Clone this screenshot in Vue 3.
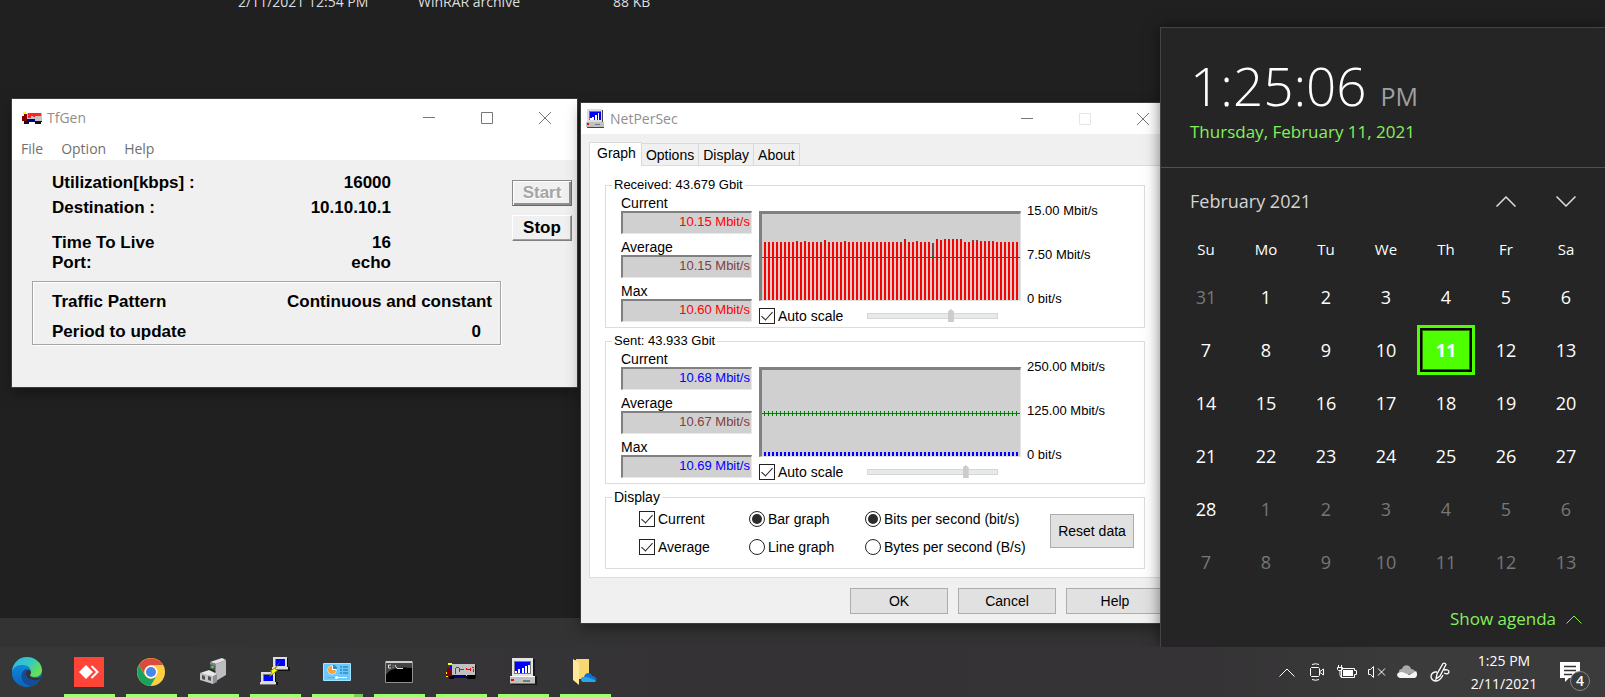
<script setup>
import { ref } from 'vue'

const tfMenu = ['File', 'Option', 'Help']
const tfRows = [
  { label: 'Utilization[kbps] :', value: '16000' },
  { label: 'Destination :', value: '10.10.10.1' },
  { label: 'Time To Live', value: '16', spaced: true },
  { label: 'Port:', value: 'echo', tight: true },
]

const tabs = ['Graph', 'Options', 'Display', 'About']

// Height of each received sample: [current, average]
const overrides = {
  8: [58, 59], 10: [58, 59], 14: [57, 58], 15: [60, 58], 20: [58, 59], 34: [57, 58],
  35: [61, 58], 38: [58, 59], 42: [44, 57], 43: [61, 58], 44: [60, 58], 45: [61, 58],
  46: [60, 61], 47: [61, 58], 48: [60, 61], 49: [61, 58], 52: [58, 60], 53: [58, 60],
  54: [58, 59], 55: [58, 59], 56: [58, 59], 57: [58, 59],
}
const received = Array.from({ length: 64 }, (_, i) => overrides[i] || [58, 58])
const sent = Array.from({ length: 64 }, () => [4, 4])

const channels = ref([
  {
    id: 'rx', title: 'Received: 43.679 Gbit', color: '#ff0000', bars: received, auto: true, slider: 65,
    stats: [['Current', '10.15 Mbit/s'], ['Average', '10.15 Mbit/s'], ['Max', '10.60 Mbit/s']],
    scale: ['15.00 Mbit/s', '7.50 Mbit/s', '0 bit/s'],
  },
  {
    id: 'tx', title: 'Sent: 43.933 Gbit', color: '#0000ff', bars: sent, auto: true, slider: 77,
    stats: [['Current', '10.68 Mbit/s'], ['Average', '10.67 Mbit/s'], ['Max', '10.69 Mbit/s']],
    scale: ['250.00 Mbit/s', '125.00 Mbit/s', '0 bit/s'],
  },
])

const graphKind = ref('bar')
const unit = ref('bits')
const showCurrent = ref(true)
const showAverage = ref(true)

const weekdays = ['Su', 'Mo', 'Tu', 'We', 'Th', 'Fr', 'Sa']
const weeks = Array.from({ length: 6 }, (_, w) =>
  Array.from({ length: 7 }, (_, d) => {
    const n = w * 7 + d
    if (n === 0) return { day: 31, muted: true }
    return n > 28 ? { day: n - 28, muted: true } : { day: n, muted: false }
  }),
)
</script>

<template>
  <main class="desktop">
    <div class="file-row">
      <span class="file-date">2/11/2021 12:54 PM</span>
      <span class="file-type">WinRAR archive</span>
      <span class="file-size">88 KB</span>
    </div>
    <div class="status-band"></div>

    <section class="window tfgen" aria-label="TfGen">
      <header class="titlebar tf-title">
        <svg class="tf-icon" viewBox="0 0 20 12" shape-rendering="crispEdges">
          <path fill="#c4c4c4" d="M5 1h15v8H5z" /><path fill="#800000" d="M2 2h3v7H0V4h2z" />
          <path fill="#ff0" d="M1 0h3v2H1z" /><path fill="#f22" d="M6 1h13v3H6zM6 4h3v2H6zM11 4h2v1h-2z" />
          <path fill="#000080" d="M5 7h8v3H5z" /><path fill="#111" d="M2 9h5v3H2zM13 9h6v3h-6zM6 9h14v1H6z" />
        </svg>
        <h1>TfGen</h1>
        <div class="caption">
          <button aria-label="Minimize"><svg viewBox="0 0 12 12"><path d="M0 5.5h12" /></svg></button>
          <button aria-label="Maximize"><svg viewBox="0 0 12 12"><path d="M.5.5h11v11H.5z" /></svg></button>
          <button aria-label="Close"><svg viewBox="0 0 12 12"><path d="M0 0l12 12M12 0L0 12" /></svg></button>
        </div>
      </header>
      <nav class="tf-menu"><button v-for="m in tfMenu" :key="m">{{ m }}</button></nav>
      <div class="tf-body">
        <div class="tf-info">
          <div v-for="r in tfRows" :key="r.label" class="tf-row" :class="{ spaced: r.spaced, tight: r.tight }">
            <span>{{ r.label }}</span><span>{{ r.value }}</span>
          </div>
          <div class="tf-group">
            <div class="tf-row"><span>Traffic Pattern</span><span>Continuous and constant</span></div>
            <div class="tf-row"><span>Period to update</span><span class="period">0</span></div>
          </div>
        </div>
        <div class="tf-actions">
          <button class="start" disabled>Start</button>
          <button>Stop</button>
        </div>
      </div>
    </section>

    <section class="window netpersec" aria-label="NetPerSec">
      <header class="titlebar np-title">
        <svg class="np-icon" viewBox="0 0 27 28" shape-rendering="crispEdges">
          <path fill="#444" d="M3 1h21v17h2v9H1v-9h3z" /><path fill="#dcdcdc" d="M2 0h21v18H2z" /><path fill="#c0c0c0" d="M0 18h25v8H0z" />
          <path fill="#777" d="M0 25h25v1H0zM4 3h17v13H4z" /><path fill="#00f" d="M5 4h16v11H5z" />
          <path fill="#fff" d="M6 12h2v3H6zM9 11h2v4H9zM13 8h2v7h-2zM17 6h2v9h-2z" /><path fill="#f00" d="M1 20h3v2H1z" /><path fill="#777" d="M13 21h7v2h-7z" />
        </svg>
        <h1>NetPerSec</h1>
        <div class="caption">
          <button aria-label="Minimize"><svg viewBox="0 0 12 12"><path d="M0 5.5h12" /></svg></button>
          <button aria-label="Maximize" disabled><svg viewBox="0 0 12 12"><path d="M.5.5h11v11H.5z" /></svg></button>
          <button aria-label="Close"><svg viewBox="0 0 12 12"><path d="M0 0l12 12M12 0L0 12" /></svg></button>
        </div>
      </header>
      <div class="np-body">
        <div class="tabs" role="tablist">
          <button v-for="(t, i) in tabs" :key="t" role="tab" :aria-selected="i === 0">{{ t }}</button>
        </div>
        <div class="panel">
          <fieldset v-for="c in channels" :key="c.id">
            <legend class="small">{{ c.title }}</legend>
            <div class="channel">
              <div class="stats">
                <label v-for="(s, i) in c.stats" :key="s[0]">
                  <span>{{ s[0] }}</span>
                  <input readonly :value="s[1]" :class="i === 1 ? 'avg' : c.id" />
                </label>
              </div>
              <div class="plot-col">
                <svg class="plot" viewBox="0 0 258 86" shape-rendering="crispEdges">
                  <g v-for="(b, i) in c.bars" :key="i">
                    <rect :x="2 + i * 4" :y="86 - b[1]" width="2" :height="b[1]" fill="#804040" />
                    <rect :x="2 + i * 4" :y="86 - b[0]" width="2" :height="b[0]" :fill="c.color" />
                    <rect v-if="c.id === 'tx'" :x="2 + i * 4" y="41" width="1" height="5" fill="#008000" />
                  </g>
                  <rect x="0" y="43" width="258" height="1" fill="#008000" />
                  <rect v-if="c.id === 'rx'" x="170" y="41" width="2" height="2" fill="#008000" />
                </svg>
                <div class="plot-tools">
                  <label class="opt"><input v-model="c.auto" type="checkbox" />Auto scale</label>
                  <input v-model="c.slider" type="range" min="0" max="100" :aria-label="c.title + ' scale'" />
                </div>
              </div>
              <div class="scale small"><span v-for="s in c.scale" :key="s">{{ s }}</span></div>
            </div>
          </fieldset>
          <fieldset>
            <legend>Display</legend>
            <div class="display">
              <div class="choices">
                <label class="opt"><input v-model="showCurrent" type="checkbox" />Current</label>
                <label class="opt"><input v-model="graphKind" type="radio" name="kind" value="bar" />Bar graph</label>
                <label class="opt"><input v-model="unit" type="radio" name="unit" value="bits" />Bits per second (bit/s)</label>
                <label class="opt"><input v-model="showAverage" type="checkbox" />Average</label>
                <label class="opt"><input v-model="graphKind" type="radio" name="kind" value="line" />Line graph</label>
                <label class="opt"><input v-model="unit" type="radio" name="unit" value="bytes" />Bytes per second (B/s)</label>
              </div>
              <button class="push reset">Reset data</button>
            </div>
          </fieldset>
        </div>
        <footer><button class="push">OK</button><button class="push">Cancel</button><button class="push">Help</button></footer>
      </div>
    </section>

    <aside class="flyout">
      <header>
        <p class="time"><span>1:25:06</span><small>PM</small></p>
        <a href="#" class="today">Thursday, February 11, 2021</a>
      </header>
      <div class="month">
        <button class="month-name">February 2021</button>
        <button class="chev" aria-label="Previous month"><svg viewBox="0 0 20 11"><path d="M.5 10.500L10 1l9.500 9.500" /></svg></button>
        <button class="chev" aria-label="Next month"><svg viewBox="0 0 20 11"><path d="M.5.500L10 10l9.500-9.500" /></svg></button>
      </div>
      <table>
        <thead><tr><th v-for="d in weekdays" :key="d">{{ d }}</th></tr></thead>
        <tbody>
          <tr v-for="(w, i) in weeks" :key="i">
            <td v-for="(d, j) in w" :key="j">
              <button :class="{ muted: d.muted, selected: d.day === 11 && !d.muted }">{{ d.day }}</button>
            </td>
          </tr>
        </tbody>
      </table>
      <button class="agenda">Show agenda <svg viewBox="0 0 16 9"><path d="M.5 8.500L8 1l7.500 7.500" /></svg></button>
    </aside>

    <footer class="taskbar">
      <div class="apps">
        <button class="app idle" aria-label="Edge">
          <svg width="30" height="30" viewBox="0 0 30 30">
            <defs>
              <linearGradient id="edgeTop" x1="0" y1="0" x2="1" y2=".6"><stop offset="0" stop-color="#2bb5ea" /><stop offset=".55" stop-color="#35c9c3" /><stop offset="1" stop-color="#6be04d" /></linearGradient>
              <linearGradient id="edgeLeft" x1="0" y1="0" x2="0" y2="1"><stop offset="0" stop-color="#1287d8" /><stop offset="1" stop-color="#0c62b8" /></linearGradient>
            </defs>
            <circle cx="15" cy="15" r="15" fill="#0f6fc6" />
            <path fill="url(#edgeTop)" d="M0 14C1 6 7 0 15 0c8 0 15 6 15 13 0 4-3 7-7 7-3 0-5-1-5-2 0-1 1-1 1-3 0-3-3-6-8-6-5 0-9 2-11 5z" />
            <path fill="url(#edgeLeft)" d="M0 14c2-4 5-6 10-6 4 0 7 1 8 4-5-1-9 3-9 8 0 4 3 8 7 10C7 30-1 24 0 14z" />
            <path fill="#114d98" d="M10 16c-2 7 3 13 9 13 4-1 7-4 9-7-5 2-12 1-14-4-1-3 0-5 1-6-2 0-4 2-5 4z" />
            <path fill="#343434" d="M14 14c2-2 4-1 5 1 0 2-1 2-1 3 0 2 3 3 6 3 2 0 4-1 6-2l-2 3c-6 3-13 0-14-4-1-2 0-3 0-4z" />
          </svg>
        </button>
        <button class="app" aria-label="AnyDesk">
          <svg width="30" height="30" viewBox="0 0 30 30"><path fill="#ff4438" d="M0 0h30v30H0z" /><path fill="#fff" d="M5 15l7-7 7 7-7 7z" /><path fill="none" stroke="#fff" stroke-width="2" d="M16.500 9l6 6-6 6" transform="translate(1)" /></svg>
        </button>
        <button class="app" aria-label="Chrome">
          <svg width="28" height="28" viewBox="0 0 28 28">
            <circle cx="14" cy="14" r="14" fill="#ffcd42" /><path fill="#dc4a3d" d="M2 7a14 14 0 0 1 24 0H14a7 7 0 0 0-6.500 9z" />
            <path fill="#1aa260" d="M2 7a14 14 0 0 0 11.500 21L19 18.500a7 7 0 0 1-11-1z" /><circle cx="14" cy="14" r="6.500" fill="#fff" /><circle cx="14" cy="14" r="5" fill="#4a86e8" />
          </svg>
        </button>
        <button class="app" aria-label="Devices">
          <svg width="28" height="28" viewBox="0 0 28 28">
            <path fill="#e2e2e4" d="M11 4l12-4 4 2-10 4z" /><path fill="#85868a" d="M11 4l6 2v13l-6-3z" /><path fill="#bcbdc1" d="M17 6l10-4v15l-10 6z" /><path fill="#555" d="M11 6l5 2v8l-5-2z" />
            <circle cx="13.500" cy="9" r="1.300" fill="#3bea35" /><path fill="none" stroke="#222" stroke-width="1.500" d="M8 15c0-4 5-4 8-1" />
            <path fill="#e8e8ea" d="M1 15l9-3 8 4-4 3z" /><path fill="#c5c6ca" d="M1 15l13 3v8L1 22z" /><path fill="#909196" d="M14 18l4-2v8l-4 2z" /><path fill="#555" d="M3 17l3 1v4l-3-1zM9 18l3 1v4l-3-1z" />
          </svg>
        </button>
        <button class="app" aria-label="PuTTY">
          <svg width="30" height="30" viewBox="0 0 30 30" shape-rendering="crispEdges">
            <path fill="#111" d="M14 1h14v9h2v4H14zM2 16h14v9h2v3H2z" /><path fill="#ddd" d="M13 0h14v10H13zM12 10h16v3H12zM1 15h14v10H1zM0 25h16v3H0z" />
            <path fill="#777" d="M15 2h10v7H15zM3 17h10v7H3zM12 12h16v1H12zM0 27h16v1H0z" /><path fill="#00f" d="M16 2h9v7h-9zM4 18h9v6H4z" />
            <path fill="#ff0" stroke="#4a4500" stroke-width=".5" d="M20 5l-5 7 3 1-9 7 3-5-2-1 5-3z" shape-rendering="auto" />
          </svg>
        </button>
        <button class="app grouped" aria-label="Control Panel">
          <svg width="28" height="18" viewBox="0 0 28 18">
            <path fill="#6bc8fb" stroke="#a5e3ff" d="M.5.5h27v17H.5z" /><circle cx="9" cy="7" r="4.500" fill="#fff" /><path fill="#f6a33b" d="M9 7V3a4 4 0 1 0 4 4z" /><path fill="#368ac4" d="M10 6V2a4 4 0 0 1 4 4z" />
            <path stroke="#3587bd" stroke-width="1.500" d="M17 4h2m1 0h5M17 7h2m1 0h5M17 10h2m1 0h5" /><path stroke="#e28b29" d="M4 14.500h9" /><path stroke="#fff" d="M14 14.500h10" /><circle cx="13.500" cy="14.500" r="1.500" fill="#fff" />
          </svg>
        </button>
        <button class="app" aria-label="Command Prompt">
          <svg width="28" height="22" viewBox="0 0 28 22">
            <path fill="#000" stroke="#909090" d="M.5.5h27v21H.5z" /><path fill="#c8d0d0" d="M1 0h26v2H1z" /><path fill="#444" d="M1 2h26v5C14 5 4 8 1 14z" />
            <path stroke="#ddd" fill="none" d="M6 4H3.500v3H6M8 4.500v.6m0 1v.6M10 4l2 3.500h6" />
          </svg>
        </button>
        <button class="app" aria-label="TfGen">
          <svg width="30" height="18" viewBox="0 0 30 18" shape-rendering="crispEdges">
            <path fill="#111" d="M7 2h23v13H7z" /><path fill="#c0c0c0" d="M6 1h23v12H6z" /><path fill="#800000" d="M1 5h5v9H0V9h1z" /><path fill="#ff0" d="M2 0h4v2H2zM0 9h1v2H0zM0 13h2v1H0z" />
            <path fill="#00f" d="M4 3h2v3H4z" /><path fill="#f00" d="M9 5h1v6H9zM10 4h3v1h-3zM13 5h1v4h-1zM14 6h4v1h-4zM20 5h1v2h-1zM21 6h3v1h-3zM24 5h1v3h-1zM26 4h2v1h-2zM27 6h1v3h-1z" />
            <path fill="#000080" d="M6 12h14v2H6z" /><path fill="#000" d="M3 13h5v3H3zM21 12h8v4h-8z" />
          </svg>
        </button>
        <button class="app" aria-label="NetPerSec">
          <svg width="27" height="28" viewBox="0 0 27 28" shape-rendering="crispEdges">
            <path fill="#181818" d="M3 1h22v17h2v9H1v-9h3z" /><path fill="#e4e4e4" d="M2 0h21v18H2z" /><path fill="#c0c0c0" d="M0 19h25v7H0z" /><path fill="#fff" d="M0 18h25v1H0z" />
            <path fill="#777" d="M0 25h25v1H0zM4 3h17v13H4z" /><path fill="#00f" d="M5 4h15v11H5z" />
            <path fill="#fff" d="M5 13h2v2H5zM8 11h2v4H8zM12 10h2v5h-2zM15 8h2v7h-2zM18 7h2v8h-2z" /><path fill="#f00" d="M1 21h3v2H1z" /><path fill="#777" d="M13 22h7v2h-7z" />
          </svg>
        </button>
        <button class="app" aria-label="File Explorer">
          <svg width="24" height="27" viewBox="0 0 24 27">
            <path fill="#e8bd58" d="M0 1h16v19H0z" /><path fill="#f8d775" d="M3 0h13v20H3z" /><path fill="#ffe79b" d="M0 0l6 4v22l-6-5z" />
            <path fill="#0b74d0" d="M11 23c-4 0-4-5 0-5 1-5 7-5 8-1 5 0 6 6 2 6z" /><path fill="#2aa5ee" d="M10 23c-3-1-2-5 1-5 4 0 9 2 12 4-1 1-1 1-3 1z" />
          </svg>
        </button>
      </div>
      <div class="tray">
        <button aria-label="Show hidden icons"><svg width="16" height="9" viewBox="0 0 16 9"><path d="M.5 8.500L8 1l7.500 7.500" /></svg></button>
        <button aria-label="Camera"><svg width="16" height="18" viewBox="0 0 16 18"><path d="M2.500 4.500h7l1 1v7l-1 1h-7l-1-1v-7zM11 8.500l3.500-2.500v6L11 9.500M3 1.500Q7 0 10 1.500M3 16.500q4 1.500 7 0" /></svg></button>
        <button aria-label="Battery"><svg width="20" height="14" viewBox="0 0 20 14"><path d="M4.500 3.500h13v2h2v4h-2v3h-13z" /><path class="fill" d="M6 5h10v6H6z" /><path d="M.5 2.500h5v2l-1 1h-3l-1-1zM1.500 0v2M4.500 0v2M3 5.500v4q0 3 2 3" /></svg></button>
        <button aria-label="Muted"><svg width="20" height="12" viewBox="0 0 20 12"><path d="M1.500 3.500h2l3-3v11l-3-3h-2zM11 2.500l7 7M18 2.500l-7 7" /></svg></button>
        <button aria-label="OneDrive"><svg width="20" height="14" viewBox="0 0 20 14"><path class="dim" d="M2 7C2 4 4 4 5 4c1-5 8-5 9 0 2 0 4 1 4 3l-8 3z" /><path class="fill" d="M3 13c-4-1-4-6 1-6 2 0 6 2 8 3l7-4c2 3 1 7-2 7z" opacity=".95" /></svg></button>
        <button class="ink" aria-label="Windows Ink"><svg width="20" height="20" viewBox="0 0 20 20"><path d="M6 17l1-5L13 1.500q2-1 3 1L10 14zM7 10H5q-4 1-4 5 1 4 5 4 4 0 7-6M14 8q5-1 5 2-1 3-5 1" stroke-width="1.300" /></svg></button>
        <button class="clock"><span>1:25 PM</span><span>2/11/2021</span></button>
        <button class="notice" aria-label="4 notifications">
          <svg width="20" height="20" viewBox="0 0 20 20"><path class="fill" d="M0 0h20v16H9l-4 4v-4H0z" /><path class="lines" d="M4 4.500h12M4 8.500h12M4 12.500h8" /></svg>
          <span class="badge">4</span>
        </button>
      </div>
    </footer>
  </main>
</template>

<style>
body { background: #202020; overflow: hidden; }
</style>

<style scoped>
* { box-sizing: border-box; }
button { font: inherit; color: inherit; background: none; border: 0; padding: 0; }
h1, p { margin: 0; font-weight: 400; }
svg { display: block; }
.desktop { position: relative; height: 100vh; overflow: hidden; background: #202020; font-family: "Open Sans", "Noto Sans", sans-serif; }
.file-row { position: absolute; top: -8px; left: 238px; display: flex; font-size: 14px; line-height: 20px; color: #dedede; }
.file-date { width: 180px; }
.file-type { width: 195px; }
.status-band { position: absolute; left: 0; right: 0; bottom: 50px; height: 29px; background: #333; }

.window { position: absolute; background: #f0f0f0; color: #000; box-shadow: 0 0 0 1px #3c3c3c, 0 5px 14px rgba(0, 0, 0, .4); }
.titlebar { display: flex; align-items: center; background: #fff; color: #8f8f8f; }
.titlebar h1 { font-size: 14px; line-height: 20px; }
.caption { margin: 0 3px 0 auto; display: flex; }
.caption button { width: 58px; height: 30px; display: grid; place-items: center; }
.caption svg { width: 12px; height: 12px; fill: none; stroke: #777; }
.caption button:disabled svg { stroke: #e6e6e6; }

.tfgen { left: 12px; top: 99px; width: 565px; height: 288px; display: flex; flex-direction: column; }
.tf-title { height: 37px; padding-left: 10px; gap: 5px; }
.tf-icon { width: 20px; height: 12px; }
.tf-menu { display: flex; gap: 18px; height: 24px; padding-left: 9px; background: #fff; color: #707070; font-size: 14px; line-height: 26px; }
.tf-body { flex: 1; display: flex; justify-content: space-between; padding: 13px 5px 0 20px; font: 700 17px/20px "Liberation Sans", Arial, sans-serif; }
.tf-info { width: 469px; }
.tf-row { display: flex; justify-content: space-between; padding: 0 110px 0 20px; margin-bottom: 5px; }
.tf-row.spaced { margin-top: 15px; margin-bottom: 0; }
.tf-group { margin-top: 8px; border: 1px solid #a5a5a5; box-shadow: 1px 1px #fff, inset 1px 1px #fff; padding: 10px 0 2px; }
.tf-group .tf-row { padding: 0 8px 0 19px; margin-bottom: 10px; }
.tf-group .tf-row:last-child { margin-bottom: 0; }
.tf-group .period { padding-right: 11px; }
.tf-actions { display: flex; flex-direction: column; gap: 9px; padding-top: 7px; }
.tf-actions button { width: 60px; height: 26px; border: 1px solid; border-color: #fff #808080 #808080 #fff; box-shadow: inset -1px -1px #a0a0a0; }
.tf-actions .start { color: #a5a5a5; text-shadow: 1px 1px #fff; border-color: #8a8a8a #6a6a6a #6a6a6a #8a8a8a; box-shadow: inset 1px 1px #fff, inset -2px -2px #909090; }

.netpersec { left: 581px; top: 103px; width: 594px; font: 14px/16px "Liberation Sans", Arial, sans-serif; }
.np-title { height: 31px; padding-left: 5px; gap: 5px; font-family: "Open Sans", "Noto Sans", sans-serif; }
.np-icon { width: 19px; height: 20px; }
.np-body { padding: 8px 11px 9px 8px; }
.small { font-size: 13px; }
.tabs { display: flex; align-items: flex-end; height: 24px; margin-bottom: -1px; }
.tabs button { height: 22px; margin-bottom: 1px; padding: 0 4px; border: 1px solid #d9d9d9; border-left: 0; border-bottom: 0; }
.tabs button[aria-selected="true"] { position: relative; height: 24px; margin-bottom: 0; padding: 0 5px 4px 7px; background: #fff; border-left: 1px solid #d9d9d9; }
.panel { background: #fff; border: 1px solid #dcdcdc; padding: 11px 18px 8px 15px; display: flex; flex-direction: column; gap: 5px; }
fieldset { margin: 0; padding: 0; min-width: 0; border: 1px solid #dcdcdc; }
legend { margin-left: 6px; padding: 0 2px; height: 16px; }
.channel { display: flex; padding: 2px 0 3px 15px; }
.stats { width: 131px; display: flex; flex-direction: column; gap: 5px; }
.stats label { display: block; }
.stats span { display: block; height: 16px; }
.stats input { display: block; width: 100%; height: 23px; padding: 0 1px 4px; font: inherit; font-size: 13px; text-align: right; background: #d0d0d0; border: 1px solid; border-width: 2px 1px 1px 2px; border-color: #808080 #e8e8e8 #e8e8e8 #808080; outline: 0; }
.rx { color: #f00; }
.tx { color: #00f; }
.avg { color: #804040; }
.plot-col { margin: 16px 6px 0 7px; width: 262px; }
.plot { width: 262px; height: 90px; background: #d0d0d0; border: solid; border-width: 3px 1px 1px 3px; border-color: #808080 #e3e3e3 #e3e3e3 #808080; }
.plot-tools { display: flex; align-items: center; margin-top: 7px; }
.opt { display: flex; align-items: center; gap: 3px; height: 16px; }
.opt input { appearance: none; width: 16px; height: 16px; margin: 0; border: 1px solid #222; background: #fff; display: grid; place-items: center; }
.opt input[type="checkbox"]:checked::before { content: ""; width: 5px; height: 10px; margin-top: -3px; border: solid #222; border-width: 0 1px 1px 0; transform: rotate(42deg); }
.opt input[type="radio"] { border-radius: 50%; }
.opt input[type="radio"]:checked::before { content: ""; width: 10px; height: 10px; border-radius: 50%; background: #2b2b2b; }
.plot-tools .opt { width: 108px; white-space: nowrap; }
.plot-tools input[type="range"] { appearance: none; width: 131px; height: 14px; margin: 0; background: none; }
.plot-tools input[type="range"]::-webkit-slider-runnable-track { height: 6px; background: #e7eaea; border: 1px solid #d6d6d6; }
.plot-tools input[type="range"]::-webkit-slider-thumb { appearance: none; width: 6px; height: 13px; margin-top: -5px; background: #ccc; clip-path: polygon(50% 0, 100% 20%, 100% 100%, 0 100%, 0 20%); }
.scale { display: flex; flex-direction: column; gap: 28px; padding-top: 8px; }
.display { display: flex; justify-content: space-between; padding: 6px 10px 13px 33px; }
.choices { display: grid; grid-template-columns: 110px 116px auto; gap: 12px 0; }
.push { height: 26px; width: 98px; background: #e1e1e1; border: 1px solid #adadad; }
.push.reset { width: 84px; height: 34px; margin-top: 3px; }
.np-body footer { display: flex; justify-content: flex-end; gap: 10px; margin-top: 10px; }

.flyout { position: absolute; right: 0; bottom: 50px; width: 445px; height: 620px; background: #252525; border: solid #444; border-width: 1px 0 0 1px; color: #fff; box-shadow: 0 0 14px rgba(0, 0, 0, .5); display: flex; flex-direction: column; }
.flyout header { height: 140px; padding: 24px 0 0 29px; border-bottom: 1px solid #505050; }
.time { display: flex; align-items: baseline; gap: 14px; height: 68px; font-weight: 300; font-size: 53px; line-height: 68px; }
.time small { font-size: 25px; line-height: 30px; font-weight: 400; color: #a0a0a0; }
.today { display: block; width: max-content; font-size: 17px; line-height: 24px; color: #84f05c; text-decoration: none; }
.month { display: flex; align-items: center; height: 66px; padding-right: 9px; }
.month-name { margin: 0 auto 0 29px; font-size: 18px; color: #d4d4d4; }
.chev { width: 60px; display: grid; place-items: center; }
.chev svg { width: 20px; height: 11px; fill: none; stroke: #ddd; stroke-width: 1.500; }
table { margin-left: 15px; width: 420px; table-layout: fixed; border-collapse: collapse; font-size: 18px; line-height: 24px; }
th { height: 36px; padding: 0 0 6px; font-size: 15px; font-weight: 400; }
td { height: 53px; padding: 0; text-align: center; }
td button { width: 58px; height: 50px; }
.muted { color: #777; }
.selected { background: #4dff00; border: 3px solid #4dff00; box-shadow: inset 0 0 0 2px #000, inset 0 0 0 3px #237000; font-weight: 700; }
.agenda { display: flex; align-items: center; gap: 10px; margin: auto 23px 16px auto; font-size: 17px; line-height: 24px; color: #84f05c; }
.agenda svg { width: 16px; height: 9px; fill: none; stroke: #84f05c; }

.taskbar { position: absolute; left: 0; right: 0; bottom: 0; height: 50px; display: flex; justify-content: space-between; background: linear-gradient(90deg, #373737, #343235 45%, #353335 75%, #3b3b3b 88%); color: #fff; }
.apps { display: flex; gap: 11px; margin-left: 2px; }
.app { width: 51px; padding: 3px 1px 0 0; display: grid; place-items: center; border-bottom: 3px solid #a0ff70; }
.app.idle { border-color: transparent; }
.app.grouped { border-image: linear-gradient(90deg, #a0ff70 40px, #7cc95a 40px) 3; border-width: 0 0 3px; }
.tray { display: flex; align-items: center; padding-right: 15px; }
.tray > button { width: 30px; height: 50px; display: grid; place-items: center; }
.tray svg { fill: none; stroke: #fff; }
.tray .fill { fill: #fff; stroke: none; }
.tray .dim { fill: #aaa; stroke: none; }
.tray .lines { stroke: #333; stroke-width: 1.500; }
.tray .ink { width: 36px; }
.tray .clock { width: 92px; font-size: 14px; line-height: 23px; align-content: center; }
.tray .notice { position: relative; width: 40px; margin-left: 0; }
.badge { position: absolute; left: 20px; top: 24px; width: 20px; height: 20px; border: 1px solid #888; border-radius: 50%; background: #3b3b3b; font-size: 14px; font-weight: 600; line-height: 18px; text-align: center; }
</style>
